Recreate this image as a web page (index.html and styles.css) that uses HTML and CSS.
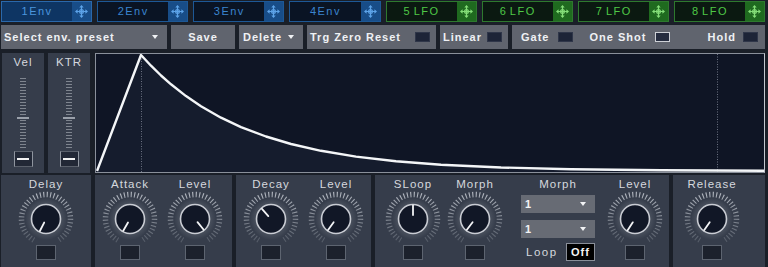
FILE: index.html
```html
<!DOCTYPE html>
<html>
<head>
<meta charset="utf-8">
<link rel="stylesheet" href="styles.css">
</head>
<body>
<svg class="defs" width="0" height="0">
  <defs>
    <linearGradient id="tickgrad" x1="0" y1="0" x2="0" y2="1">
      <stop offset="0" stop-color="#aeb3bc"/>
      <stop offset="1" stop-color="#565d69"/>
    </linearGradient>
    <radialGradient id="halo">
      <stop offset="0.7" stop-color="#4a515e"/>
      <stop offset="1" stop-color="#363d4b"/>
    </radialGradient>
    <symbol id="move" viewBox="0 0 13 13">
      <g fill="none" stroke="currentColor" stroke-width="1.2">
        <path d="M6.5 2V11M2 6.5H11"/>
        <circle cx="6.5" cy="6.5" r="1.9"/>
      </g>
      <path fill="currentColor" d="M6.5 0L4.3 2.6H8.7Z M6.5 13L4.3 10.4H8.7Z M0 6.5L2.6 4.3V8.7Z M13 6.5L10.4 4.3V8.7Z"/>
    </symbol>
    <symbol id="knob" viewBox="0 0 62 56" overflow="visible">
      <circle cx="31" cy="28" r="21" fill="url(#halo)"/>
      <path d="M18.75 49.22 A24.5 24.5 0 1 1 43.25 49.22" fill="none" stroke="url(#tickgrad)" stroke-width="5.5" stroke-dasharray="1.1 2.3"/>
      <circle cx="31" cy="28" r="14.5" fill="#111726" stroke="#c9ccd3" stroke-width="1.6"/>
    </symbol>
  </defs>
</svg>
<div class="app">
  <div class="tabs">
    <div class="tab tab-env active"><span class="tab-label">1Env</span><span class="tab-icon"><svg width="13" height="13"><use href="#move"/></svg></span></div>
    <div class="tab tab-env"><span class="tab-label">2Env</span><span class="tab-icon"><svg width="13" height="13"><use href="#move"/></svg></span></div>
    <div class="tab tab-env"><span class="tab-label">3Env</span><span class="tab-icon"><svg width="13" height="13"><use href="#move"/></svg></span></div>
    <div class="tab tab-env"><span class="tab-label">4Env</span><span class="tab-icon"><svg width="13" height="13"><use href="#move"/></svg></span></div>
    <div class="tab tab-lfo"><span class="tab-label">5 LFO</span><span class="tab-icon"><svg width="13" height="13"><use href="#move"/></svg></span></div>
    <div class="tab tab-lfo"><span class="tab-label">6 LFO</span><span class="tab-icon"><svg width="13" height="13"><use href="#move"/></svg></span></div>
    <div class="tab tab-lfo"><span class="tab-label">7 LFO</span><span class="tab-icon"><svg width="13" height="13"><use href="#move"/></svg></span></div>
    <div class="tab tab-lfo"><span class="tab-label">8 LFO</span><span class="tab-icon"><svg width="13" height="13"><use href="#move"/></svg></span></div>
  </div>

  <div class="toolbar">
    <div class="btn btn-select"><span>Select env. preset</span><span class="caret"></span></div>
    <div class="btn btn-save">Save</div>
    <div class="btn btn-delete"><span>Delete</span><span class="caret"></span></div>
    <div class="btn btn-check btn-trg"><span>Trg Zero Reset</span><span class="cb"></span></div>
    <div class="btn btn-check btn-linear"><span>Linear</span><span class="cb"></span></div>
    <div class="btn btn-group">
      <span class="g-gate">Gate</span><span class="cb cb-gate"></span>
      <span class="g-oneshot">One Shot</span><span class="cb cb-light cb-oneshot"></span>
      <span class="g-hold">Hold</span><span class="cb cb-hold"></span>
    </div>
  </div>

  <div class="middle">
    <div class="slider-panel slider-vel">
      <div class="slider-label">Vel</div>
      <div class="scale"></div>
      <div class="handle"><span></span></div>
    </div>
    <div class="slider-panel slider-ktr">
      <div class="slider-label">KTR</div>
      <div class="scale"></div>
      <div class="handle"><span></span></div>
    </div>
    <div class="graph">
      <svg width="668" height="118" viewBox="0 0 668 118">
        <path class="area" d="M1 117 L45 1 L55 11.7 L65 21.5 L75 30.3 L90 42.1 L105 52.2 L125 63.7 L145 73.1 L170 82.5 L195 90 L225 96.8 L260 102.6 L300 107.3 L345 110.7 L405 113.5 L475 115.2 L565 116.3 L668 116.7 L668 118 L1 118 Z"/>
        <line class="dots" x1="45.5" y1="2" x2="45.5" y2="118"/>
        <line class="dots" x1="621.5" y1="0" x2="621.5" y2="118"/>
        <path class="curve" d="M1 117 L45 1 L55 11.7 L65 21.5 L75 30.3 L90 42.1 L105 52.2 L125 63.7 L145 73.1 L170 82.5 L195 90 L225 96.8 L260 102.6 L300 107.3 L345 110.7 L405 113.5 L475 115.2 L565 116.3 L668 116.7"/>
      </svg>
    </div>
  </div>

  <div class="bottom">
    <section class="panel p-delay">
      <div class="kcol">
        <div class="klabel">Delay</div>
        <svg class="knob" viewBox="0 0 62 56"><use href="#knob"/><line class="ind" x1="31" y1="24" x2="31" y2="14.5" transform="rotate(207 31 28)"/></svg>
        <div class="kbox"></div>
      </div>
    </section>
    <section class="panel p-attack">
      <div class="kcol">
        <div class="klabel">Attack</div>
        <svg class="knob" viewBox="0 0 62 56"><use href="#knob"/><line class="ind" x1="31" y1="24" x2="31" y2="14.5" transform="rotate(210 31 28)"/></svg>
        <div class="kbox"></div>
      </div>
      <div class="kcol">
        <div class="klabel">Level</div>
        <svg class="knob" viewBox="0 0 62 56"><use href="#knob"/><line class="ind" x1="31" y1="24" x2="31" y2="14.5" transform="rotate(141 31 28)"/></svg>
        <div class="kbox"></div>
      </div>
    </section>
    <section class="panel p-decay">
      <div class="kcol">
        <div class="klabel">Decay</div>
        <svg class="knob" viewBox="0 0 62 56"><use href="#knob"/><line class="ind" x1="31" y1="24" x2="31" y2="14.5" transform="rotate(-42 31 28)"/></svg>
        <div class="kbox"></div>
      </div>
      <div class="kcol">
        <div class="klabel">Level</div>
        <svg class="knob" viewBox="0 0 62 56"><use href="#knob"/><line class="ind" x1="31" y1="24" x2="31" y2="14.5" transform="rotate(216 31 28)"/></svg>
        <div class="kbox"></div>
      </div>
    </section>
    <section class="panel p-morph">
      <div class="kcol">
        <div class="klabel">SLoop</div>
        <svg class="knob" viewBox="0 0 62 56"><use href="#knob"/><line class="ind" x1="31" y1="24" x2="31" y2="14.5" transform="rotate(0 31 28)"/></svg>
        <div class="kbox"></div>
      </div>
      <div class="kcol">
        <div class="klabel">Morph</div>
        <svg class="knob" viewBox="0 0 62 56"><use href="#knob"/><line class="ind" x1="31" y1="24" x2="31" y2="14.5" transform="rotate(217 31 28)"/></svg>
        <div class="kbox"></div>
      </div>
      <div class="morph-col">
        <div class="klabel">Morph</div>
        <div class="dropdown dd-first"><span>1</span><span class="caret"></span></div>
        <div class="dropdown dd-second"><span>1</span><span class="caret"></span></div>
        <div class="loop-row"><span class="loop-label">Loop</span><span class="off-box">Off</span></div>
      </div>
      <div class="kcol kcol-level">
        <div class="klabel">Level</div>
        <svg class="knob" viewBox="0 0 62 56"><use href="#knob"/><line class="ind" x1="31" y1="24" x2="31" y2="14.5" transform="rotate(213 31 28)"/></svg>
        <div class="kbox"></div>
      </div>
    </section>
    <section class="panel p-release">
      <div class="kcol">
        <div class="klabel">Release</div>
        <svg class="knob" viewBox="0 0 62 56"><use href="#knob"/><line class="ind" x1="31" y1="24" x2="31" y2="14.5" transform="rotate(215 31 28)"/></svg>
        <div class="kbox"></div>
      </div>
    </section>
  </div>
</div>
</body>
</html>
```

FILE: styles.css
```css
html, body {
  margin: 0;
  padding: 0;
  background: #1a1f28;
}
body {
  font-family: "Liberation Sans", Arial, sans-serif;
  width: 768px;
  height: 267px;
  overflow: hidden;
}
.defs {
  display: block;
  width: 0;
  height: 0;
  overflow: hidden;
}
.app {
  width: 768px;
  height: 267px;
}

/* tabs */
.tabs {
  display: grid;
  grid-template-columns: repeat(8, 1fr);
  column-gap: 5px;
  padding: 1px 3px 0 1px;
  height: 21px;
}
.tab {
  display: flex;
  box-sizing: border-box;
  height: 21px;
  border: 1px solid;
}
.tab-label {
  flex: 1;
  text-align: center;
  font-size: 11px;
  letter-spacing: 1.5px;
  line-height: 19px;
}
.tab-icon {
  width: 19px;
  display: flex;
  align-items: center;
  justify-content: center;
}
.tab-icon svg { display: block; }
.tab-env {
  border-color: #1d5896;
  background: #0a1424;
  color: #3a84cf;
}
.tab-env.active {
  background: #0e3563;
  border-color: #2a68ab;
  color: #4b95de;
}
.tab-env .tab-icon {
  background: #184d88;
  color: #5da3e8;
}
.tab-lfo {
  border-color: #2e792e;
  background: #0b1911;
  color: #4fc847;
}
.tab-lfo .tab-label { word-spacing: -2px; }
.tab-lfo .tab-icon {
  background: #1f6a1f;
  color: #84de78;
}

/* toolbar */
.toolbar {
  display: flex;
  gap: 4px;
  margin-top: 3px;
  padding-left: 1px;
  height: 24px;
}
.btn {
  box-sizing: border-box;
  height: 24px;
  background: #60646e;
  color: #eff1f4;
  font-weight: bold;
  font-size: 11px;
  letter-spacing: 1px;
  display: flex;
  align-items: center;
  white-space: nowrap;
}
.caret {
  width: 0;
  height: 0;
  border-left: 3px solid transparent;
  border-right: 3px solid transparent;
  border-top: 4px solid #eff1f4;
}
.btn-select {
  width: 166px;
  padding: 0 9px 0 3px;
  justify-content: space-between;
}
.btn-save {
  width: 64px;
  justify-content: center;
}
.btn-delete {
  width: 64px;
  padding-left: 4px;
  gap: 6px;
}
.btn-check {
  justify-content: space-between;
  padding: 0 6px 0 3px;
}
.btn-trg { width: 129px; }
.btn-linear { width: 68px; }
.cb {
  box-sizing: border-box;
  width: 15px;
  height: 10px;
  background: #1d2437;
  border: 1px solid #2f3649;
  flex: none;
}
.cb-light {
  background: #262d40;
  border-color: #cdd0d6;
}
.btn-group {
  width: 253px;
  padding-left: 9px;
}
.cb-gate { margin-left: 9px; }
.g-oneshot { margin-left: 16px; }
.cb-oneshot { margin-left: 9px; }
.g-hold { margin-left: auto; }
.cb-hold { margin-left: 7px; margin-right: 7px; }

/* middle */
.middle {
  display: flex;
  margin-top: 4px;
  height: 120px;
  padding-left: 2px;
}
.slider-panel {
  width: 42px;
  background: #363d4b;
  display: flex;
  flex-direction: column;
  align-items: center;
}
.slider-ktr { margin-left: 4px; }
.slider-label {
  margin-top: 2px;
  line-height: 14px;
  font-size: 11.5px;
  letter-spacing: 1px;
  color: #d5d8de;
}
.scale {
  position: relative;
  margin-top: 9px;
  width: 6px;
  height: 71px;
  background: repeating-linear-gradient(to bottom, #7f858f 0 1px, transparent 1px 3px);
}
.scale::after {
  content: "";
  position: absolute;
  left: -3px;
  right: -3px;
  top: 39px;
  height: 2px;
  background: #9aa0aa;
}
.handle {
  box-sizing: border-box;
  margin-top: 2px;
  width: 19px;
  height: 16px;
  background: #222836;
  border: 1px solid #8f959f;
  border-top-color: #5a606b;
  border-bottom-color: #5a606b;
  display: flex;
  align-items: center;
  justify-content: center;
}
.handle span {
  display: block;
  width: 12px;
  height: 1.5px;
  background: #f2f2f2;
}
.graph {
  margin-left: 5px;
  width: 670px;
  height: 120px;
  box-sizing: border-box;
  border: 1px solid #8a909b;
  border-right-color: #c3c7cf;
  background: #0f1525;
}
.graph svg { display: block; }
.graph .area { fill: #151c2d; }
.graph .curve {
  fill: none;
  stroke: #f4f6f8;
  stroke-width: 2.4;
  stroke-linejoin: round;
}
.graph .dots {
  stroke: #6c7282;
  stroke-width: 1;
  stroke-dasharray: 1 1.5;
}

/* bottom */
.bottom {
  display: flex;
  gap: 4px;
  margin-top: 2px;
  padding-left: 1px;
  height: 93px;
}
.panel {
  background: #363d4b;
  display: flex;
  box-sizing: border-box;
}
.p-delay { width: 90px; justify-content: center; }
.p-attack, .p-decay { padding-left: 4px; gap: 3px; }
.p-attack { width: 137px; }
.p-decay { width: 135px; }
.p-morph { width: 294px; padding-left: 7px; }
.p-release { width: 92px; padding-left: 8px; }
.kcol {
  width: 62px;
  display: flex;
  flex-direction: column;
  align-items: center;
}
.klabel {
  height: 19px;
  line-height: 19px;
  font-size: 11.5px;
  letter-spacing: 1px;
  color: #d5d8de;
  white-space: nowrap;
}
.knob {
  display: block;
  width: 62px;
  height: 56px;
  margin-top: -3px;
  overflow: visible;
}
.knob .ind {
  stroke: #f3f4f6;
  stroke-width: 1.8;
  stroke-linecap: round;
}
.kbox {
  box-sizing: border-box;
  margin-top: -2px;
  width: 20px;
  height: 15px;
  background: #1c212c;
  border: 1px solid #5d6470;
}
.morph-col {
  margin-left: 15px;
  width: 74px;
  display: flex;
  flex-direction: column;
}
.morph-col .klabel { text-align: center; }
.dropdown {
  box-sizing: border-box;
  height: 18px;
  background: #676b74;
  color: #f2f3f5;
  font-size: 11px;
  font-weight: bold;
  display: flex;
  align-items: center;
  justify-content: space-between;
  padding: 0 9px 0 4px;
}
.dd-first { margin-top: 1px; }
.dd-second { margin-top: 7px; }
.dropdown .caret { border-top-color: #f2f3f5; }
.loop-row {
  margin-top: 5px;
  display: flex;
  align-items: center;
  justify-content: space-between;
  padding-left: 5px;
}
.loop-label {
  font-size: 11.5px;
  letter-spacing: 1.5px;
  color: #d5d8de;
}
.off-box {
  box-sizing: border-box;
  width: 29px;
  height: 18px;
  background: #000;
  border: 1px solid #8a8f99;
  color: #f4f4f4;
  font-size: 11px;
  font-weight: bold;
  letter-spacing: 1px;
  line-height: 16px;
  text-align: center;
}
.kcol-level { margin-left: 9px; }
```
